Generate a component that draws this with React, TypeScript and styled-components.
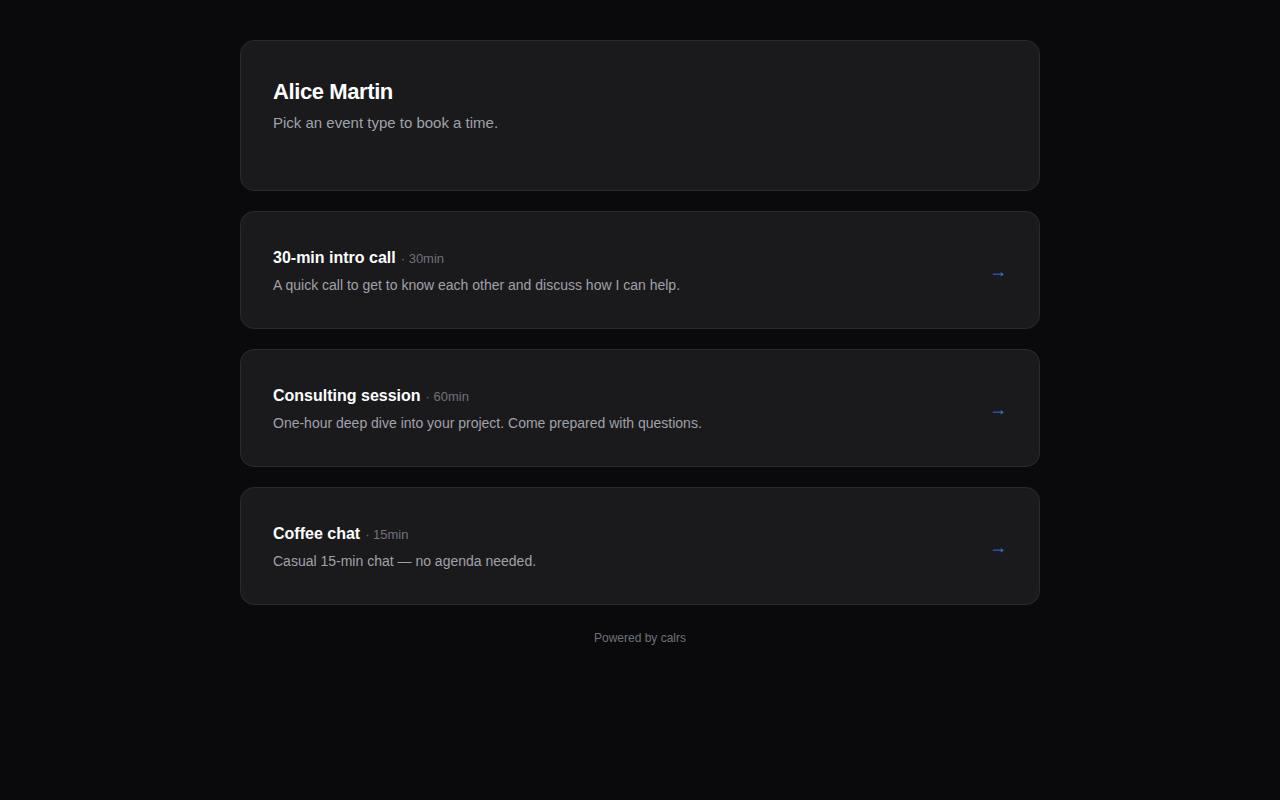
import React from 'react';
import styled, { createGlobalStyle } from 'styled-components';

const GlobalStyle = createGlobalStyle`
  html, body {
    margin: 0;
    padding: 0;
    background: #0a0a0c;
    font-family: "Liberation Sans", Arial, sans-serif;
    color: #fafafa;
  }
`;

const Page = styled.main`
  width: 800px;
  margin: 0 auto;
  padding: 40px 0;
  display: flex;
  flex-direction: column;
  gap: 20px;
`;

const Card = styled.div`
  background: #1a1a1d;
  border: 1px solid #2a2a2e;
  border-radius: 14px;
  padding: 34px 32px 32px;
`;

const Name = styled.h1`
  margin: 0 0 4px;
  font-size: 22px;
  line-height: 33px;
  font-weight: 700;
  letter-spacing: -0.4px;
  color: #ffffff;
`;

const Intro = styled.p`
  margin: 0 0 24px;
  font-size: 15px;
  line-height: 22px;
  color: #a1a1aa;
`;

const EventCard = styled(Card)`
  display: flex;
  align-items: center;
  justify-content: space-between;
  cursor: pointer;
`;

const EventBody = styled.div`
  display: flex;
  flex-direction: column;
  gap: 4px;
`;

const EventTitle = styled.div`
  font-size: 16px;
  line-height: 24px;
  font-weight: 700;
  color: #ffffff;
`;

const Meta = styled.span`
  font-size: 13px;
  font-weight: 400;
  color: #71717a;
  margin-left: 5px;
`;

const Desc = styled.div`
  font-size: 14px;
  line-height: 21px;
  color: #a1a1aa;
`;

const Arrow = styled.span`
  font-size: 18px;
  color: #3b7be6;
  line-height: 1;
`;

const Footer = styled.div`
  text-align: center;
  font-size: 12px;
  color: #71717a;
  margin-top: 6px;
`;

const events = [
  { title: '30-min intro call', length: '30min', desc: 'A quick call to get to know each other and discuss how I can help.' },
  { title: 'Consulting session', length: '60min', desc: 'One-hour deep dive into your project. Come prepared with questions.' },
  { title: 'Coffee chat', length: '15min', desc: 'Casual 15-min chat \u2014 no agenda needed.' },
];

export default function App() {
  return (
    <>
      <GlobalStyle />
      <Page>
        <Card>
          <Name>Alice Martin</Name>
          <Intro>Pick an event type to book a time.</Intro>
        </Card>
        {events.map((e) => (
          <EventCard key={e.title}>
            <EventBody>
              <EventTitle>
                {e.title}
                <Meta>· {e.length}</Meta>
              </EventTitle>
              <Desc>{e.desc}</Desc>
            </EventBody>
            <Arrow>→</Arrow>
          </EventCard>
        ))}
        <Footer>Powered by calrs</Footer>
      </Page>
    </>
  );
}
